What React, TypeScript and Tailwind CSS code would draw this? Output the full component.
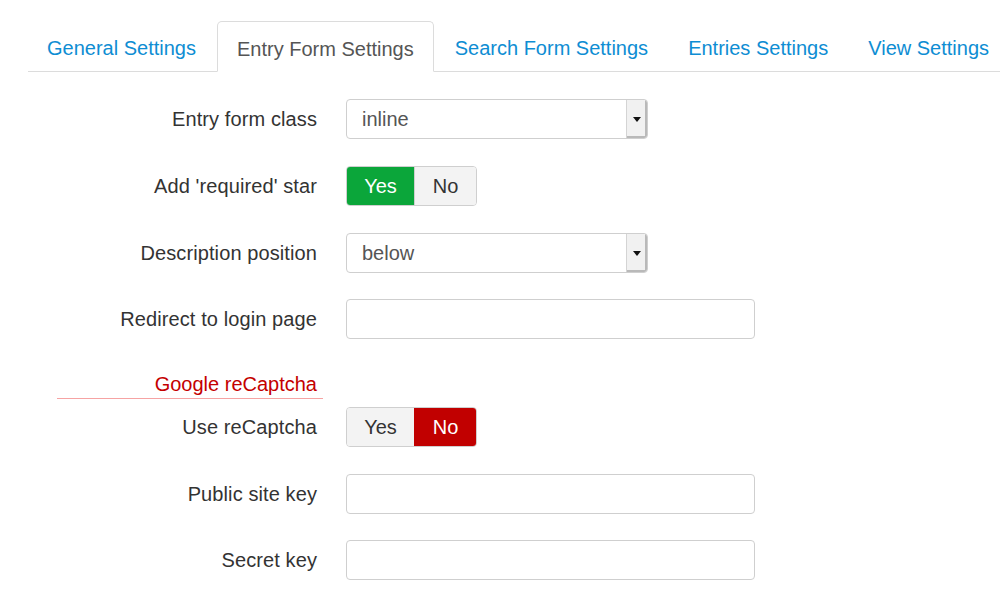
import React from "react"

const tabs = [
  { label: "General Settings", active: false },
  { label: "Entry Form Settings", active: true },
  { label: "Search Form Settings", active: false },
  { label: "Entries Settings", active: false },
  { label: "View Settings", active: false },
]

function Label({ children }: { children: React.ReactNode }) {
  return <div className="w-[317px] shrink-0 text-right text-[20px] tracking-[0.1px] text-[#333]">{children}</div>
}

function Select({ value }: { value: string }) {
  return (
    <div className="flex h-[40px] w-[302px] overflow-hidden rounded-[4px] border border-[#cfcfcf] bg-white">
      <div className="flex flex-1 items-center pl-[15px] text-[20px] text-[#555]">{value}</div>
      <div className="flex w-[21px] items-center justify-center border-l border-[#d4d4d4] bg-[#f1f1f1] shadow-[inset_-2px_-2px_0_#b9b9b9]">
        <svg width="8" height="5" viewBox="0 0 8 5">
          <path d="M0 0h8L4 5z" fill="#111" />
        </svg>
      </div>
    </div>
  )
}

function Toggle({ yes }: { yes: boolean }) {
  const on = "text-white"
  return (
    <div className="flex h-[40px] overflow-hidden rounded-[4px] border border-[#cfcfcf] text-[20px]">
      <div
        className={`flex w-[67px] items-center justify-center ${
          yes ? `bg-[#0ba63a] ${on}` : "bg-[#f3f3f3] text-[#333]"
        }`}
      >
        Yes
      </div>
      <div
        className={`flex w-[62px] items-center justify-center border-l ${
          yes ? "border-[#cfcfcf] bg-[#f3f3f3] text-[#333]" : `border-[#c10000] bg-[#c10000] ${on}`
        }`}
      >
        No
      </div>
    </div>
  )
}

function TextInput() {
  return <div className="h-[40px] w-[409px] rounded-[4px] border border-[#cfcfcf] bg-white" />
}

function Row({ label, children, className = "" }: { label: string; children: React.ReactNode; className?: string }) {
  return (
    <div className={`flex h-[40px] items-center gap-[29px] ${className}`}>
      <Label>{label}</Label>
      {children}
    </div>
  )
}

export default function App() {
  return (
    <div className="h-[599px] w-[1000px] overflow-hidden bg-white pt-[21px] font-['Liberation_Sans',Arial,sans-serif]">
      <ul className="ml-[28px] flex h-[51px] border-b border-[#dcdcdc]">
        {tabs.map((t) => (
          <li
            key={t.label}
            className={`mr-[2px] flex shrink-0 items-center whitespace-nowrap px-[19px] pt-[4px] text-[20px] ${
              t.active
                ? "-mb-px rounded-t-[5px] border border-[#dcdcdc] border-b-white bg-white text-[#555]"
                : "text-[#0e8dd3]"
            }`}
          >
            {t.label}
          </li>
        ))}
      </ul>

      <div className="flex flex-col">
        <Row label="Entry form class" className="mt-[27px]">
          <Select value="inline" />
        </Row>
        <Row label="Add 'required' star" className="mt-[27px]">
          <Toggle yes />
        </Row>
        <Row label="Description position" className="mt-[27px]">
          <Select value="below" />
        </Row>
        <Row label="Redirect to login page" className="mt-[26px]">
          <TextInput />
        </Row>

        <div className="ml-[57px] mt-[33px] h-[27px] w-[266px] border-b border-[#f6a3a3] pr-[6px] text-right text-[20px] leading-[24px] text-[#c40000]">
          Google reCaptcha
        </div>

        <Row label="Use reCaptcha" className="mt-[8px]">
          <Toggle yes={false} />
        </Row>
        <Row label="Public site key" className="mt-[27px]">
          <TextInput />
        </Row>
        <Row label="Secret key" className="mt-[26px]">
          <TextInput />
        </Row>
      </div>
    </div>
  )
}
